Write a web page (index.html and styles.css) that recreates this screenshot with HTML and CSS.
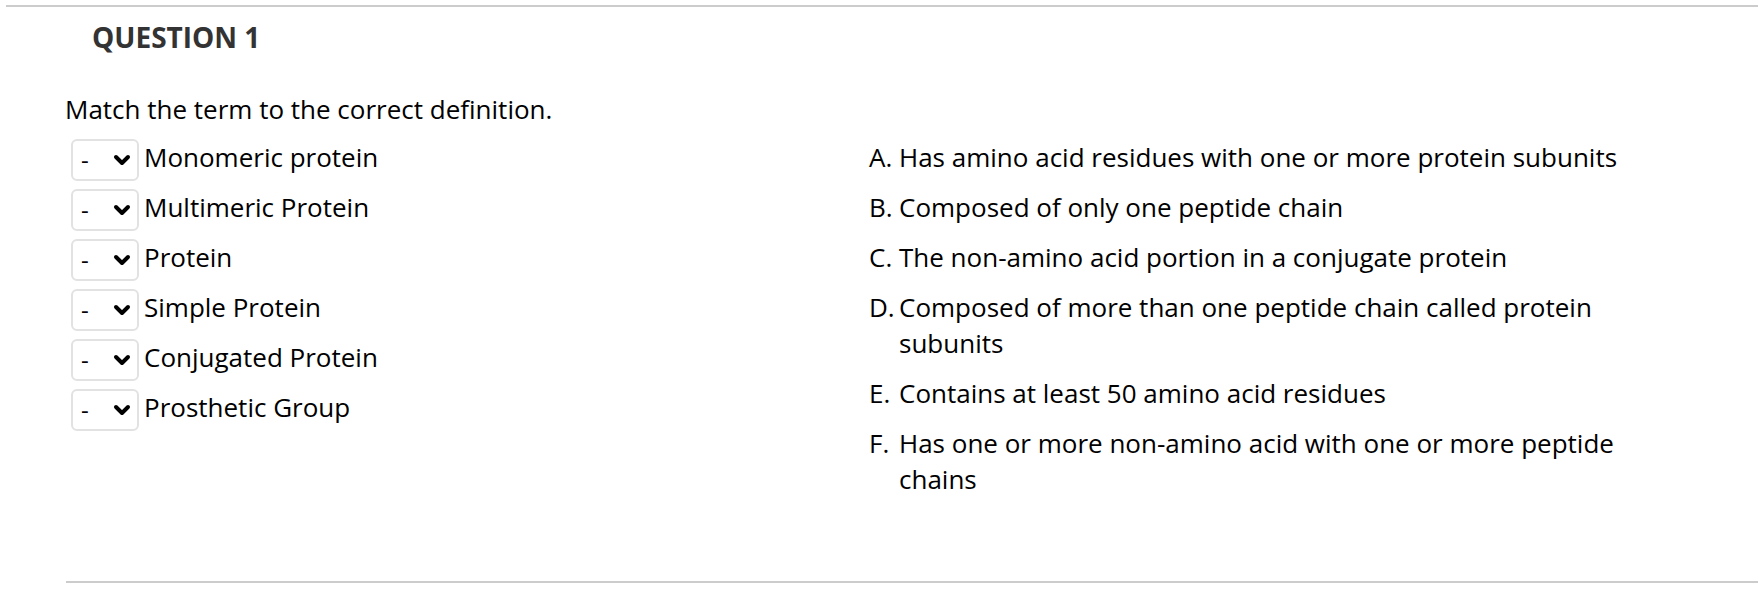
FILE: index.html
```html
<!DOCTYPE html>
<html lang="en">
<head>
<meta charset="utf-8">
<title>Question 1</title>
<link rel="stylesheet" href="styles.css">
</head>
<body>
<div class="top-rule"></div>
<section class="question">
  <h2 class="q-title">QUESTION 1</h2>
  <div class="q-body">
    <p class="prompt">Match the term to the correct definition.</p>
    <div class="match">
      <ul class="terms">
        <li class="term"><div class="select"><span class="dash">-</span><svg class="chev" viewBox="0 0 18 12" width="18" height="12"><path d="M3 3 L9 9 L15 3" /></svg></div><span class="term-label">Monomeric protein</span></li>
        <li class="term"><div class="select"><span class="dash">-</span><svg class="chev" viewBox="0 0 18 12" width="18" height="12"><path d="M3 3 L9 9 L15 3" /></svg></div><span class="term-label">Multimeric Protein</span></li>
        <li class="term"><div class="select"><span class="dash">-</span><svg class="chev" viewBox="0 0 18 12" width="18" height="12"><path d="M3 3 L9 9 L15 3" /></svg></div><span class="term-label">Protein</span></li>
        <li class="term"><div class="select"><span class="dash">-</span><svg class="chev" viewBox="0 0 18 12" width="18" height="12"><path d="M3 3 L9 9 L15 3" /></svg></div><span class="term-label">Simple Protein</span></li>
        <li class="term"><div class="select"><span class="dash">-</span><svg class="chev" viewBox="0 0 18 12" width="18" height="12"><path d="M3 3 L9 9 L15 3" /></svg></div><span class="term-label">Conjugated Protein</span></li>
        <li class="term"><div class="select"><span class="dash">-</span><svg class="chev" viewBox="0 0 18 12" width="18" height="12"><path d="M3 3 L9 9 L15 3" /></svg></div><span class="term-label">Prosthetic Group</span></li>
      </ul>
      <ol class="defs">
        <li class="def"><span class="marker">A.</span><span class="text">Has amino acid residues with one or more protein subunits</span></li>
        <li class="def"><span class="marker">B.</span><span class="text">Composed of only one peptide chain</span></li>
        <li class="def"><span class="marker">C.</span><span class="text">The non-amino acid portion in a conjugate protein</span></li>
        <li class="def"><span class="marker">D.</span><span class="text">Composed of more than one peptide chain called protein subunits</span></li>
        <li class="def"><span class="marker">E.</span><span class="text">Contains at least 50 amino acid residues</span></li>
        <li class="def"><span class="marker">F.</span><span class="text">Has one or more non-amino acid with one or more peptide chains</span></li>
      </ol>
    </div>
  </div>
  <div class="bottom-rule"></div>
</section>
</body>
</html>
```

FILE: styles.css
```css
html, body {
  margin: 0;
  padding: 0;
  background: #fff;
}

body {
  font-family: "Open Sans", "Liberation Sans", sans-serif;
  color: #000;
}

.top-rule {
  height: 2px;
  background: #cccccc;
  margin: 5px 0 0 6px;
}

.q-title {
  margin: 11px 0 0 92px;
  font-size: 28px;
  font-weight: 700;
  line-height: 38px;
  color: #333;
}

.q-body {
  padding-left: 65px;
}

.prompt {
  margin: 35px 0 0;
  font-size: 26px;
  line-height: 36px;
}

.match {
  display: grid;
  grid-template-columns: 804px 791px;
  margin-top: 12px;
}

.terms {
  list-style: none;
  margin: 0;
  padding: 0 0 0 6px;
  display: flex;
  flex-direction: column;
  gap: 8px;
}

.term {
  display: flex;
  align-items: flex-start;
  gap: 5px;
  height: 42px;
}

.select {
  box-sizing: border-box;
  width: 68px;
  height: 42px;
  border: 2px solid #e2e2e2;
  border-radius: 6px;
  display: flex;
  align-items: center;
  justify-content: space-between;
  padding: 0 6px 0 8px;
  background: #fff;
}

.dash {
  font-size: 24px;
  line-height: 36px;
}

.chev {
  display: block;
}

.chev path {
  fill: none;
  stroke: #000;
  stroke-width: 4;
  stroke-linecap: round;
  stroke-linejoin: round;
}

.term-label {
  font-size: 26px;
  line-height: 36px;
  white-space: nowrap;
}

.defs {
  list-style: none;
  margin: 0;
  padding: 0;
  display: flex;
  flex-direction: column;
  gap: 14px;
  font-size: 26px;
  line-height: 36px;
}

.def {
  display: grid;
  grid-template-columns: 30px 1fr;
}

.bottom-rule {
  height: 2px;
  background: #cccccc;
  margin: 84px 0 0 66px;
}
```
